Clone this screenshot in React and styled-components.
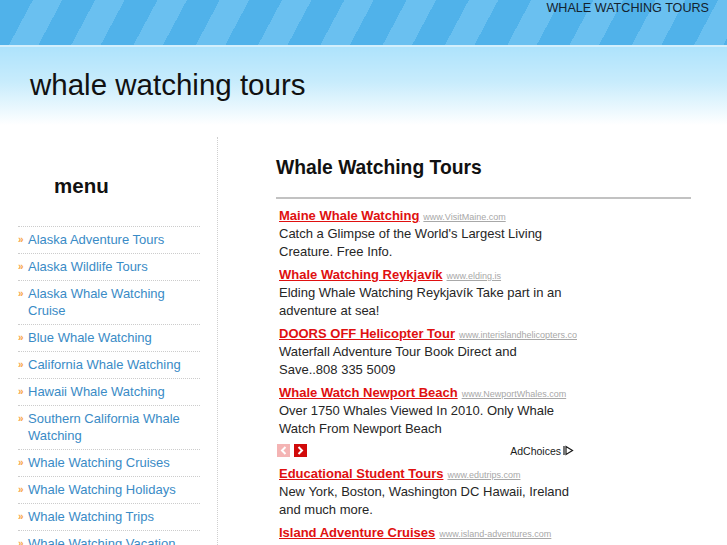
import styled, { createGlobalStyle } from "styled-components";

const GlobalStyle = createGlobalStyle`
  html, body {
    margin: 0;
    padding: 0;
    background: #ffffff;
    font-family: "Liberation Sans", Arial, sans-serif;
  }
`;

const Page = styled.div`
  width: 727px;
  height: 545px;
  overflow: hidden;
`;

const TopBand = styled.div`
  height: 47px;
  box-sizing: border-box;
  display: flex;
  justify-content: flex-end;
  padding: 1px 18px 0 0;
  background: repeating-linear-gradient(
    118deg,
    #50b2ea 0px,
    #50b2ea 29px,
    #6ac0f0 29px,
    #6ac0f0 55px
  );
  border-bottom: 2px solid #d3effc;
`;

const TopLabel = styled.div`
  font-size: 12.6px;
  line-height: 15px;
  color: #14222e;
  text-transform: uppercase;
`;

const TitleBand = styled.div`
  height: 78px;
  box-sizing: border-box;
  padding: 20px 0 0 30px;
  background: linear-gradient(180deg, #aee3fc 0%, #c8ecfc 45%, #ffffff 100%);
`;

const SiteTitle = styled.h1`
  margin: 0;
  font-size: 29.5px;
  line-height: 36px;
  font-weight: normal;
  color: #111111;
`;

const Main = styled.div`
  display: flex;
  align-items: flex-start;
`;

const Sidebar = styled.div`
  width: 218px;
  box-sizing: border-box;
  margin-top: 12px;
  padding: 37px 0 0 18px;
  min-height: 420px;
  border-right: 1px dotted #cfcfcf;
`;

const MenuHeading = styled.h2`
  margin: 0 0 28px 36px;
  font-size: 20.5px;
  line-height: 24px;
  font-weight: bold;
  color: #111111;
`;

const MenuList = styled.ul`
  list-style: none;
  margin: 0;
  padding: 0;
  width: 182px;
  border-top: 1px dotted #cccccc;
`;

const MenuItem = styled.li`
  display: flex;
  padding: 4px 0 5px;
  border-bottom: 1px dotted #cccccc;
  font-size: 13px;
  line-height: 17px;
`;

const Bullet = styled.span`
  flex: 0 0 10px;
  color: #f7a445;
  font-size: 10px;
  font-weight: bold;
`;

const MenuLink = styled.a`
  color: #3a8bc6;
  text-decoration: none;
`;

const Content = styled.div`
  flex: 1;
  padding: 31px 35px 0 58px;
`;

const PageHeading = styled.h2`
  margin: 0;
  font-size: 19.3px;
  line-height: 23px;
  font-weight: bold;
  color: #111111;
`;

const Rule = styled.div`
  margin-top: 18px;
  width: 415px;
  height: 2px;
  background: #c2c2c2;
`;

const AdBlock = styled.div`
  width: 298px;
  margin: 7px 0 0 3px;
`;

const Ad = styled.div`
  margin-bottom: 4px;
`;

const AdHead = styled.div`
  height: 18px;
  white-space: nowrap;
  overflow: hidden;
  line-height: 18px;
`;

const AdTitle = styled.a`
  color: #e01010;
  font-size: 13px;
  font-weight: bold;
  text-decoration: underline;
`;

const AdUrl = styled.a`
  margin-left: 4px;
  color: #a8a8a8;
  font-size: 9px;
  line-height: 1;
  text-decoration: underline;
`;

const AdText = styled.div`
  padding-top: 1px;
  color: #262626;
  font-size: 13px;
  line-height: 18px;
`;

const AdNav = styled.div`
  display: flex;
  align-items: center;
  justify-content: space-between;
  margin: 6px 3px 7px -2px;
  height: 13px;
`;

const Arrows = styled.div`
  display: flex;
  gap: 4px;
`;

const ArrowBox = styled.span`
  width: 13px;
  height: 13px;
  display: flex;
  align-items: center;
  justify-content: center;
  background: ${(p) => (p.$active ? "#d10a0a" : "#f4b4b4")};
`;

const AdChoices = styled.span`
  display: flex;
  align-items: center;
  gap: 2px;
  font-size: 10.5px;
  color: #1a1a1a;
`;

const MENU = [
  "Alaska Adventure Tours",
  "Alaska Wildlife Tours",
  "Alaska Whale Watching Cruise",
  "Blue Whale Watching",
  "California Whale Watching",
  "Hawaii Whale Watching",
  "Southern California Whale Watching",
  "Whale Watching Cruises",
  "Whale Watching Holidays",
  "Whale Watching Trips",
  "Whale Watching Vacation",
  "Whale Watching Tours",
];

const ADS_TOP = [
  {
    title: "Maine Whale Watching",
    url: "www.VisitMaine.com",
    text: "Catch a Glimpse of the World's Largest Living Creature. Free Info.",
  },
  {
    title: "Whale Watching Reykjavík",
    url: "www.elding.is",
    text: "Elding Whale Watching Reykjavík Take part in an adventure at sea!",
  },
  {
    title: "DOORS OFF Helicopter Tour",
    url: "www.interislandhelicopters.com",
    text: "Waterfall Adventure Tour Book Direct and Save..808 335 5009",
  },
  {
    title: "Whale Watch Newport Beach",
    url: "www.NewportWhales.com",
    text: "Over 1750 Whales Viewed In 2010. Only Whale Watch From Newport Beach",
  },
];

const ADS_BOTTOM = [
  {
    title: "Educational Student Tours",
    url: "www.edutrips.com",
    text: "New York, Boston, Washington DC Hawaii, Ireland and much more.",
  },
  {
    title: "Island Adventure Cruises",
    url: "www.island-adventures.com",
    text: "Whale watching cruises from Gloucester, Massachusetts.",
  },
];

const AdEntry = ({ ad }) => (
  <Ad>
    <AdHead>
      <AdTitle href="#">{ad.title}</AdTitle>
      <AdUrl href="#">{ad.url}</AdUrl>
    </AdHead>
    <AdText>{ad.text}</AdText>
  </Ad>
);

const Chevron = ({ left }) => (
  <svg width="7" height="9" viewBox="0 0 7 9">
    <path
      d={left ? "M5.5 1 L2 4.5 L5.5 8" : "M1.5 1 L5 4.5 L1.5 8"}
      fill="none"
      stroke="#ffffff"
      strokeWidth="2"
    />
  </svg>
);

const App = () => {
  return (
    <Page>
      <GlobalStyle />
      <TopBand>
        <TopLabel>Whale Watching Tours</TopLabel>
      </TopBand>
      <TitleBand>
        <SiteTitle>whale watching tours</SiteTitle>
      </TitleBand>
      <Main>
        <Sidebar>
          <MenuHeading>menu</MenuHeading>
          <MenuList>
            {MENU.map((item) => (
              <MenuItem key={item}>
                <Bullet>»</Bullet>
                <MenuLink href="#">{item}</MenuLink>
              </MenuItem>
            ))}
          </MenuList>
        </Sidebar>
        <Content>
          <PageHeading>Whale Watching Tours</PageHeading>
          <Rule />
          <AdBlock>
            {ADS_TOP.map((ad) => (
              <AdEntry key={ad.title} ad={ad} />
            ))}
            <AdNav>
              <Arrows>
                <ArrowBox>
                  <Chevron left />
                </ArrowBox>
                <ArrowBox $active>
                  <Chevron />
                </ArrowBox>
              </Arrows>
              <AdChoices>
                AdChoices
                <svg width="11" height="11" viewBox="0 0 11 11">
                  <path d="M1 1 V10" stroke="#1a1a1a" strokeWidth="1.2" />
                  <path
                    d="M3 1.5 L9.5 5.5 L3 9.5 Z"
                    fill="none"
                    stroke="#1a1a1a"
                    strokeWidth="1.2"
                  />
                </svg>
              </AdChoices>
            </AdNav>
            {ADS_BOTTOM.map((ad) => (
              <AdEntry key={ad.title} ad={ad} />
            ))}
          </AdBlock>
        </Content>
      </Main>
    </Page>
  );
};

export default App;
